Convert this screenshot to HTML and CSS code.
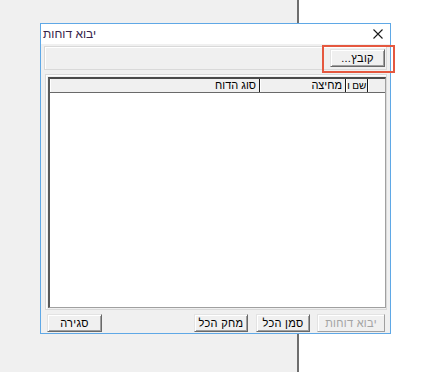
FILE: index.html
```html
<!DOCTYPE html>
<html lang="he">
<head>
<meta charset="utf-8">
<link rel="stylesheet" href="styles.css">
</head>
<body>
<div class="desk">
  <div class="pane-left"></div>
  <div class="divider"></div>
  <div class="pane-right"></div>
</div>

<div class="dialog">
  <div class="titlebar">
    <span class="title" dir="rtl">יבוא דוחות</span>
    <svg class="close" width="10" height="10" viewBox="0 0 10 10"><path d="M0.5 0.5L9.5 9.5M9.5 0.5L0.5 9.5" stroke="#1a1a1a" stroke-width="1.1" fill="none"/></svg>
  </div>
  <div class="client">
    <div class="toppanel">
      <button class="btn btn-file" dir="rtl">קובץ...</button>
    </div>
    <div class="listpanel">
      <div class="listview">
        <div class="header">
          <div class="hcell c-type" dir="rtl">סוג הדוח</div>
          <div class="hcell c-part" dir="rtl">מחיצה</div>
          <div class="hcell c-name" dir="rtl">שם ו</div>
          <div class="hcell c-empty"></div>
        </div>
        <div class="listbody"></div>
      </div>
    </div>
    <div class="bottomrow">
      <button class="btn btn-close" dir="rtl">סגירה</button>
      <div class="spacer"></div>
      <button class="btn btn-clear" dir="rtl">מחק הכל</button>
      <button class="btn btn-mark" dir="rtl">סמן הכל</button>
      <button class="btn btn-import" dir="rtl" disabled>יבוא דוחות</button>
    </div>
  </div>
</div>

<div class="highlight"></div>
</body>
</html>
```

FILE: styles.css
```css
html, body {
  margin: 0;
  padding: 0;
}
body {
  width: 435px;
  height: 372px;
  overflow: hidden;
  position: relative;
  font-family: "Liberation Sans", Arial, sans-serif;
  font-size: 11px;
  color: #000;
}
.desk {
  display: flex;
  height: 372px;
}
.pane-left {
  width: 297px;
  background: #f0f0f0;
}
.divider {
  width: 2px;
  background: #6e6e6e;
}
.pane-right {
  flex: 1;
  background: #ffffff;
}

.dialog {
  position: absolute;
  left: 40px;
  top: 23px;
  width: 349px;
  height: 309px;
  border: 1px solid #5fa8e6;
  background: #f0f0f0;
  display: flex;
  flex-direction: column;
}
.titlebar {
  height: 20px;
  background: #ffffff;
  display: flex;
  align-items: center;
  justify-content: space-between;
  padding: 0 7px 0 2px;
  flex-shrink: 0;
}
.title {
  font-size: 12px;
  color: #35234a;
}
.close {
  display: block;
}

.client {
  flex: 1;
  display: flex;
  flex-direction: column;
  padding: 2px 3px 0 3px;
}

.toppanel {
  border: 1px solid #d9d9d9;
  box-shadow: inset 1px 1px #ffffff;
  display: flex;
  justify-content: flex-end;
  align-items: flex-start;
  padding: 2px 1px 0 0;
  box-sizing: content-box;
  height: 20px;
}

.btn {
  font-family: "Liberation Sans", Arial, sans-serif;
  font-size: 11px;
  letter-spacing: 0.3px;
  color: #000;
  background: #f0f0f0;
  border: 1px solid;
  border-color: #e3e3e3 #696969 #696969 #e3e3e3;
  box-shadow: inset 1px 1px #ffffff, inset -1px -1px #a0a0a0;
  padding: 0;
  margin: 0;
  height: 18px;
  display: flex;
  align-items: center;
  justify-content: center;
  line-height: 1;
}
.btn-file {
  width: 55px;
}

.listpanel {
  margin-top: 4px;
  margin-left: 1px;
  height: 231px;
  border: 1px solid #d9d9d9;
  box-shadow: inset 1px 1px #ffffff;
  padding: 2px 0 1px 2px;
  display: flex;
}
.listview {
  flex: 1;
  display: flex;
  flex-direction: column;
  border-style: solid;
  border-width: 2px 1px 1px 2px;
  border-color: #4a4a4a #a0a0a0 #a0a0a0 #5a5a5a;
  background: #ffffff;
}
.header {
  height: 13px;
  display: flex;
  background: #f0f0f0;
  border-bottom: 1px solid #696969;
}
.hcell {
  height: 13px;
  line-height: 13px;
  text-align: right;
  padding-right: 3px;
  border-left: 1px solid #1a1a1a;
  box-shadow: inset 1px 0 #ffffff;
  white-space: nowrap;
  font-size: 11px;
  box-sizing: border-box;
}
.c-type { width: 209px; border-left: none; overflow: hidden; }
.c-part { width: 86px; overflow: hidden; }
.c-name { width: 22px; padding-right: 1px; font-size: 10px; letter-spacing: -0.2px; overflow: visible; }
.c-empty { flex: 1; }
.listbody {
  flex: 1;
}

.bottomrow {
  display: flex;
  align-items: center;
  margin-top: 4px;
  padding: 0 2px 0 3px;
}
.spacer { flex: 1; }
.btn-close { width: 55px; }
.btn-clear { width: 54px; }
.btn-mark { width: 54px; margin-left: 8px; }
.btn-import {
  width: 68px;
  margin-left: 7px;
  color: #a3a3a3;
  border-color: #e3e3e3 #a0a0a0 #a0a0a0 #e3e3e3;
  box-shadow: inset 1px 1px #ffffff;
}

.highlight {
  position: absolute;
  left: 322px;
  top: 45px;
  width: 69px;
  height: 24px;
  border: 2px solid #e5583f;
}
```
